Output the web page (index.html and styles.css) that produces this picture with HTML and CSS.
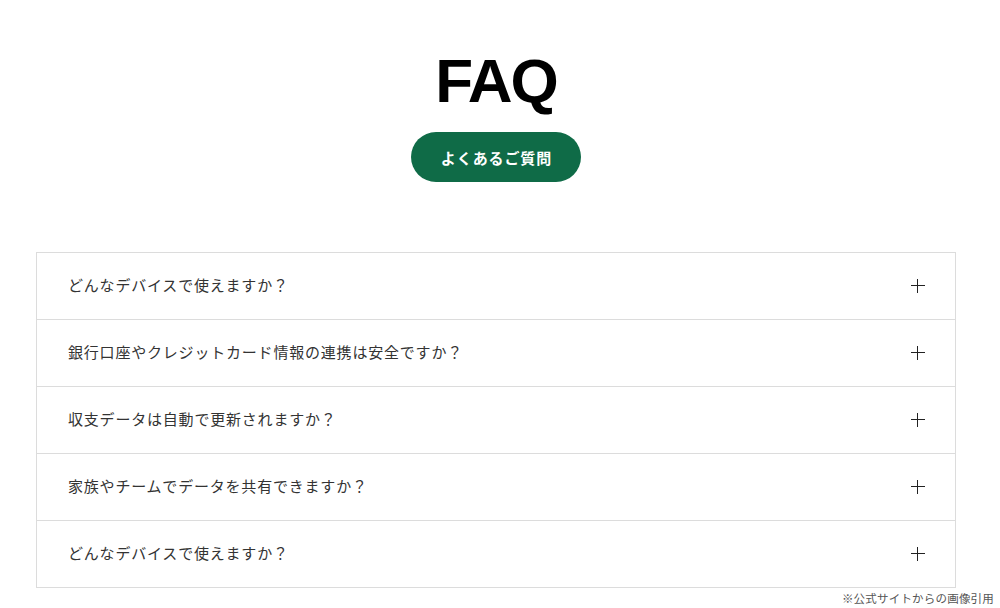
FILE: index.html
```html
<!DOCTYPE html>
<html lang="ja">
<head>
<meta charset="utf-8">
<link rel="stylesheet" href="styles.css">
</head>
<body>
<div class="page">
  <header class="head">
    <h1 class="title">FAQ</h1>
    <span class="pill">よくあるご質問</span>
  </header>
  <ul class="faq">
    <li class="item"><span class="q">どんなデバイスで使えますか？</span><span class="plus"></span></li>
    <li class="item"><span class="q">銀行口座やクレジットカード情報の連携は安全ですか？</span><span class="plus"></span></li>
    <li class="item"><span class="q">収支データは自動で更新されますか？</span><span class="plus"></span></li>
    <li class="item"><span class="q">家族やチームでデータを共有できますか？</span><span class="plus"></span></li>
    <li class="item"><span class="q">どんなデバイスで使えますか？</span><span class="plus"></span></li>
  </ul>
  <p class="note">※公式サイトからの画像引用</p>
</div>
</body>
</html>
```

FILE: styles.css
```css
html, body {
  margin: 0;
  padding: 0;
  background: #fff;
}
body {
  font-family: "Noto Sans CJK JP", "Noto Sans", sans-serif;
  color: #333;
}
.page {
  width: 920px;
  margin-left: 36px;
  padding-top: 45px;
}
.head {
  display: flex;
  flex-direction: column;
  align-items: center;
}
.title {
  margin: 0;
  font-family: "Liberation Sans", Arial, sans-serif;
  font-weight: 700;
  font-size: 62px;
  line-height: 72px;
  letter-spacing: -2px;
  color: #000;
}
.pill {
  margin-top: 15px;
  width: 170px;
  height: 50px;
  border-radius: 25px;
  background: #0f6b47;
  color: #fff;
  font-weight: 700;
  font-size: 15px;
  display: flex;
  align-items: center;
  justify-content: center;
  letter-spacing: 0.9px;
  padding-left: 1px;
  box-sizing: border-box;
}
.faq {
  list-style: none;
  margin: 70px 0 0;
  padding: 0;
  border: 1px solid #dcdcdc;
}
.item {
  height: 66px;
  display: flex;
  align-items: center;
  justify-content: space-between;
  padding: 0 30px 0 31px;
  border-top: 1px solid #dcdcdc;
}
.item:first-child {
  border-top: none;
}
.q {
  font-size: 15px;
  letter-spacing: 0.8px;
  color: #333;
  margin-bottom: 4px;
}
.plus {
  position: relative;
  width: 14px;
  height: 14px;
}
.plus::before,
.plus::after {
  content: "";
  position: absolute;
  background: #222;
}
.plus::before {
  left: 0;
  top: 6px;
  width: 14px;
  height: 1.3px;
}
.plus::after {
  top: 0;
  left: 6px;
  width: 1.3px;
  height: 14px;
}
.note {
  margin: 2px -38px 0 0;
  text-align: right;
  font-size: 11.5px;
  line-height: 16px;
  letter-spacing: 0.2px;
  color: #555;
}
```
